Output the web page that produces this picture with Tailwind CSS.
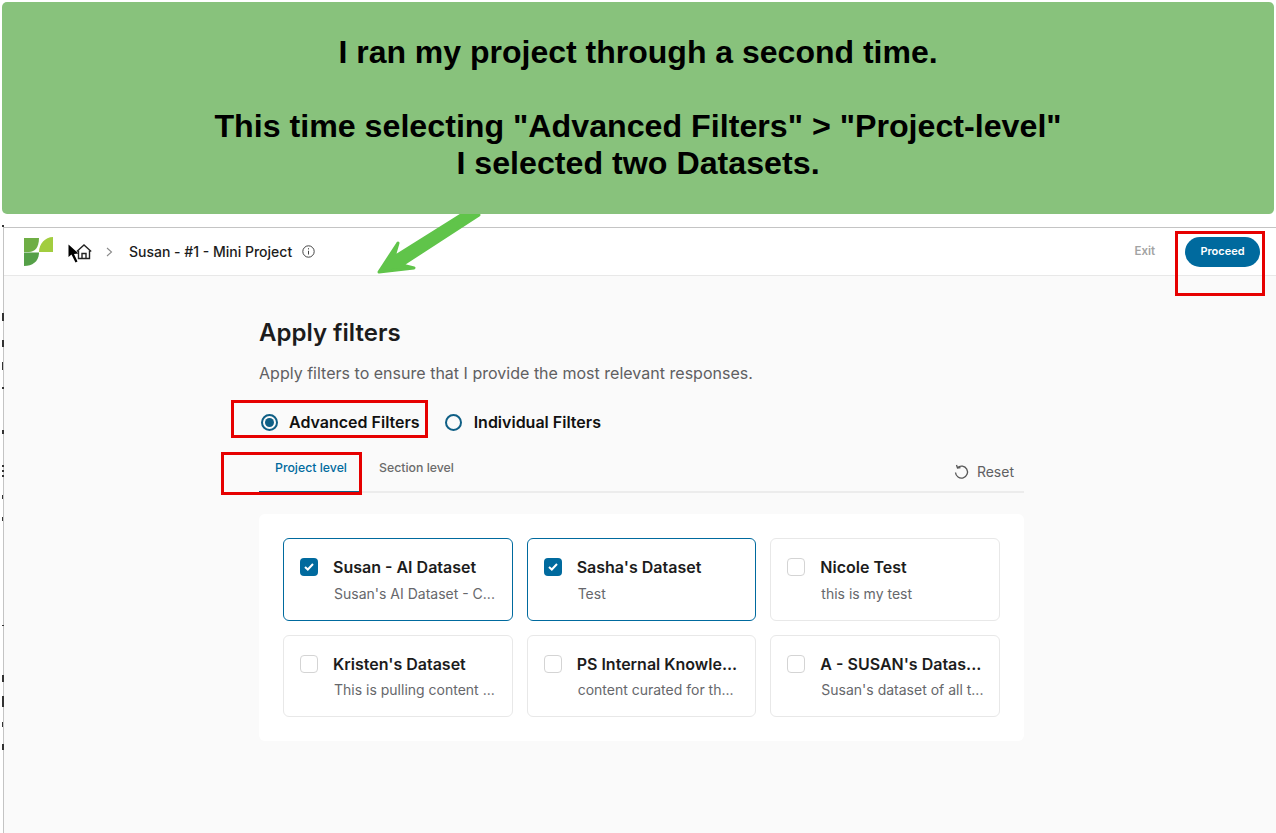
<!DOCTYPE html>
<html lang="en">
<head>
    <meta charset="UTF-8">
    <meta name="viewport" content="width=device-width, initial-scale=1.0">
    <title>Apply filters</title>
    <script src="https://cdn.jsdelivr.net/npm/@tailwindcss/browser@4"></script>
</head>
<body class="relative h-[833px] w-[1276px] overflow-hidden bg-white font-['Inter',sans-serif]">
    <!-- annotation banner -->
    <div class="absolute left-[2px] top-[2px] z-10 flex h-[212px] w-[1272px] flex-col items-center rounded-[5px] bg-[#88c27c] pt-[32px] text-center font-['Liberation_Sans',sans-serif] text-[32.2px] leading-[37px] font-bold text-black">
        <p class="text-[32px]">I ran my project through a second time.</p>
        <p class="mt-[37px]">This time selecting "Advanced Filters" &gt; "Project-level"</p>
        <p>I selected two Datasets.</p>
    </div>

    <!-- annotation arrow -->
    <svg class="absolute left-[370px] top-[214px] z-10" width="120" height="64" viewBox="0 0 120 64">
        <path d="M9 58 L28 29 L24 43 L91 1 L109 1 L32 51 L44 54 Z" fill="#60c44a" stroke="#60c44a" stroke-width="3" stroke-linejoin="round"/>
    </svg>

    <!-- annotation boxes -->
    <div class="absolute left-[1175px] top-[231px] z-10 h-[65px] w-[90px] border-[3px] border-[#e60000]"></div>
    <div class="absolute left-[231px] top-[400px] z-10 h-[38px] w-[197px] border-[3px] border-[#e60000]"></div>
    <div class="absolute left-[221px] top-[452px] z-10 h-[43px] w-[141px] border-[3px] border-[#e60000]"></div>

    <!-- screenshot edge specks -->
    <svg class="absolute left-[2px] top-[225px] z-10" width="2" height="530" viewBox="0 0 2 530" fill="#333">
        <rect y="0" width="2" height="2"/><rect y="88" width="2" height="8"/><rect y="115" width="2" height="7"/><rect y="137" width="1" height="8"/><rect y="162" width="2" height="2"/><rect y="205" width="2" height="4"/><rect y="240" width="2" height="2"/><rect y="245" width="2" height="2"/><rect y="250" width="2" height="2"/><rect y="270" width="1" height="4"/><rect y="292" width="1" height="4"/><rect y="400" width="2" height="1"/><rect y="450" width="2" height="7"/><rect y="471" width="2" height="11"/><rect y="497" width="1" height="5"/><rect y="519" width="2" height="6"/>
    </svg>

    <!-- app window -->
    <div class="absolute left-[3px] top-[227px] flex h-[606px] w-[1273px] flex-col border-t border-l border-[#c4c4c4] bg-[#fafafa]">
        <header class="flex h-[48px] shrink-0 items-center border-b border-[#e8e8e8] bg-white pl-[20px] pr-[16px]">
            <svg width="29" height="29" viewBox="0 0 29 29">
                <path d="M0 1 H15 C15 10 11 15 5 15 H0 Z" fill="#6fae45"/>
                <path d="M15 15 C15 7 21 0 29 0 V15 Z" fill="#a2cd3f"/>
                <path d="M0 15.5 H15 C15 24 9 29 0 29 Z" fill="#55a048"/>
            </svg>
            <svg class="ml-[23px]" width="16" height="18" viewBox="0 0 16 18" fill="none" stroke="#222" stroke-width="1.4">
                <path d="M0.8 8.5 L8 2 L15.2 8.5"/>
                <path d="M2.5 7.5 V15.5 H13.5 V7.5"/>
                <path d="M6 15.5 V10.5 H10 V15.5"/>
            </svg>
            <svg class="ml-[14px]" width="7" height="10" viewBox="0 0 7 10" fill="none" stroke="#8a8a8a" stroke-width="1.1"><path d="M1 1 L5.5 5 L1 9"/></svg>
            <span class="ml-[16px] text-[14px] font-medium text-[#1c1c1c]">Susan - #1 - Mini Project</span>
            <svg class="ml-[10px]" width="13" height="13" viewBox="0 0 13 13" fill="none" stroke="#444" stroke-width="1"><circle cx="6.5" cy="6.5" r="5.7"/><path d="M6.5 5.8 V9.5"/><path d="M6.5 3.2 V4.4"/></svg>
            <span class="ml-auto text-[11.5px] font-semibold text-[#a3a3a3]">Exit</span>
            <button class="ml-[30px] h-[30px] w-[75px] rounded-full bg-[#006a9e] text-[11px] font-semibold text-white">Proceed</button>
        </header>

        <main class="ml-[255px] w-[765px]">
            <h1 class="mt-[42px] text-[24px] leading-[30px] font-semibold text-[#1c1c1c]">Apply filters</h1>
            <p class="mt-[13px] text-[16.05px] leading-[24px] text-[#5f6062]">Apply filters to ensure that I provide the most relevant responses.</p>

            <div class="mt-[27px] flex h-[20px] items-center text-[16px] font-semibold text-[#111]">
                <span class="ml-[2px] flex h-[17px] w-[17px] items-center justify-center rounded-full border-2 border-[#0f5f85]">
                    <span class="h-[9px] w-[9px] rounded-full bg-[#0f5f85]"></span>
                </span>
                <span class="ml-[11px]">Advanced Filters</span>
                <span class="ml-[25px] h-[17px] w-[17px] rounded-full border-2 border-[#0f5f85]"></span>
                <span class="ml-[12px]">Individual Filters</span>
            </div>

            <div class="mt-[20px] flex h-[41px] border-b-2 border-[#ececec]">
                <div class="-mb-[2px] h-[41px] w-[103px] border-b-2 border-[#0f5f85] pl-[16px] pt-[8px] text-[12.3px] font-medium leading-[16px] text-[#006a9e]">Project level</div>
                <div class="ml-[17px] pt-[8px] text-[12.3px] font-medium leading-[16px] text-[#6b6b6b]">Section level</div>
                <div class="ml-auto mr-[10px] flex items-start pt-[10px] text-[14px] leading-[20px] text-[#5f6062]">
                    <svg class="mr-[8px] mt-[2px]" width="15" height="16" viewBox="0 0 15 16" fill="none" stroke="#555" stroke-width="1.3"><path d="M3.5 3.6 A6 6 0 1 1 1.5 8.5"/><path d="M2.5 1 L3.5 4 L6.5 3.6"/></svg>
                    Reset
                </div>
            </div>

            <div class="mt-[21px] grid h-[227px] grid-cols-3 gap-x-[14px] gap-y-[14px] rounded-[6px] bg-white p-[24px]">
                <label class="flex h-[83px] rounded-[6px] border border-[#006a9e] pl-[16px] pt-[19px]">
                    <span class="flex h-[18px] w-[18px] shrink-0 items-center justify-center rounded-[4px] bg-[#006a9e]">
                        <svg width="10" height="8" viewBox="0 0 10 8" fill="none" stroke="#fff" stroke-width="2"><path d="M1 4 L3.8 6.5 L9 1"/></svg>
                    </span>
                    <span class="ml-[15px]">
                        <span class="block text-[16px] leading-[18px] font-semibold text-[#1c1c1c]">Susan - AI Dataset</span>
                        <span class="mt-[9px] block pl-px text-[14px] leading-[18px] text-[#66676b]">Susan's AI Dataset - C...</span>
                    </span>
                </label>
                <label class="flex h-[83px] rounded-[6px] border border-[#006a9e] pl-[16px] pt-[19px]">
                    <span class="flex h-[18px] w-[18px] shrink-0 items-center justify-center rounded-[4px] bg-[#006a9e]">
                        <svg width="10" height="8" viewBox="0 0 10 8" fill="none" stroke="#fff" stroke-width="2"><path d="M1 4 L3.8 6.5 L9 1"/></svg>
                    </span>
                    <span class="ml-[15px]">
                        <span class="block text-[16px] leading-[18px] font-semibold text-[#1c1c1c]">Sasha's Dataset</span>
                        <span class="mt-[9px] block pl-px text-[14px] leading-[18px] text-[#66676b]">Test</span>
                    </span>
                </label>
                <label class="flex h-[83px] rounded-[6px] border border-[#e8e8e8] pl-[16px] pt-[19px]">
                    <span class="h-[18px] w-[18px] shrink-0 rounded-[4px] border border-[#d4d4d4]"></span>
                    <span class="ml-[15px]">
                        <span class="block text-[16px] leading-[18px] font-semibold text-[#1c1c1c]">Nicole Test</span>
                        <span class="mt-[9px] block pl-px text-[14px] leading-[18px] text-[#66676b]">this is my test</span>
                    </span>
                </label>
                <label class="flex h-[82px] rounded-[6px] border border-[#e8e8e8] pl-[16px] pt-[19px]">
                    <span class="h-[18px] w-[18px] shrink-0 rounded-[4px] border border-[#d4d4d4]"></span>
                    <span class="ml-[15px]">
                        <span class="block text-[16px] leading-[18px] font-semibold text-[#1c1c1c]">Kristen's Dataset</span>
                        <span class="mt-[8px] block pl-px text-[14px] leading-[18px] text-[#66676b]">This is pulling content ...</span>
                    </span>
                </label>
                <label class="flex h-[82px] rounded-[6px] border border-[#e8e8e8] pl-[16px] pt-[19px]">
                    <span class="h-[18px] w-[18px] shrink-0 rounded-[4px] border border-[#d4d4d4]"></span>
                    <span class="ml-[15px]">
                        <span class="block text-[16px] leading-[18px] font-semibold text-[#1c1c1c]">PS Internal Knowle...</span>
                        <span class="mt-[8px] block pl-px text-[14px] leading-[18px] text-[#66676b]">content curated for th...</span>
                    </span>
                </label>
                <label class="flex h-[82px] rounded-[6px] border border-[#e8e8e8] pl-[16px] pt-[19px]">
                    <span class="h-[18px] w-[18px] shrink-0 rounded-[4px] border border-[#d4d4d4]"></span>
                    <span class="ml-[15px]">
                        <span class="block text-[16px] leading-[18px] font-semibold text-[#1c1c1c]">A - SUSAN's Datas...</span>
                        <span class="mt-[8px] block pl-px text-[14px] leading-[18px] text-[#66676b]">Susan's dataset of all t...</span>
                    </span>
                </label>
            </div>
        </main>
    </div>

    <!-- mouse pointer -->
    <svg class="absolute left-[68px] top-[244px] z-10" width="14" height="20" viewBox="0 0 14 20"><path d="M0.5 0.5 V13 L3.5 10.5 L7.5 18.5 L9.5 17.5 L6 10 L10.5 9.5 Z" fill="#000"/></svg>
</body>
</html>
